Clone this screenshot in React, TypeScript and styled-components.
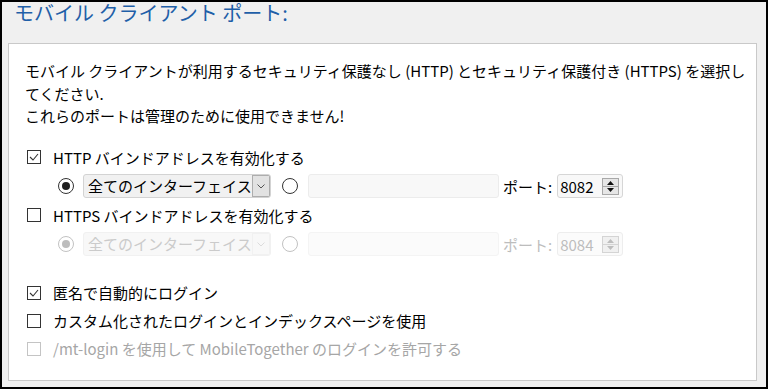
import styled, { createGlobalStyle } from "styled-components";

const GlobalStyle = createGlobalStyle`
    html, body {
        margin: 0;
        padding: 0;
        background: #f0f0f0;
    }
    body {
        font-family: "Noto Sans CJK JP", "Noto Sans", sans-serif;
    }
`;

const Frame = styled.div`
    width: 768px;
    height: 389px;
    box-sizing: border-box;
    border: 2px solid #000;
    background: #f0f0f0;
    padding: 0 9px 6px 6px;
    display: flex;
    flex-direction: column;
`;

const Title = styled.h1`
    margin: 0 0 19px 0;
    padding-left: 6px;
    font-size: 20px;
    line-height: 22px;
    font-weight: 400;
    color: #1f5fa8;
    white-space: nowrap;
`;

const Panel = styled.section`
    flex: 1;
    background: #fff;
    border: 1px solid #c9c9c9;
    padding: 16px 16px 0 16px;
    font-size: 15px;
    color: #000;
`;

const Description = styled.p`
    margin: 0;
    line-height: 22.5px;
    white-space: nowrap;
`;

const Options = styled.div`
    margin-top: 15.5px;
    padding-left: 2px;
    display: flex;
    flex-direction: column;
`;

const CheckRow = styled.label<{ $disabled?: boolean; $spaced?: boolean }>`
    height: 28px;
    display: flex;
    align-items: center;
    gap: 12px;
    margin-top: ${(p) => (p.$spaced ? "19.5px" : "0")};
    color: ${(p) => (p.$disabled ? "#a6a6a6" : "#000")};
    white-space: nowrap;
`;

const Box = styled.span<{ $disabled?: boolean }>`
    width: 14px;
    height: 14px;
    box-sizing: border-box;
    border: 1px solid ${(p) => (p.$disabled ? "#c4c4c4" : "#333")};
    background: #fff;
    display: flex;
    align-items: center;
    justify-content: center;
    flex-shrink: 0;
`;

const RadioRow = styled.div<{ $disabled?: boolean }>`
    height: 30px;
    display: flex;
    align-items: center;
    padding-left: 31px;
    color: ${(p) => (p.$disabled ? "#bdbdbd" : "#000")};
`;

const Radio = styled.span<{ $checked?: boolean; $disabled?: boolean; $gap?: number }>`
    width: 16px;
    height: 16px;
    box-sizing: border-box;
    border-radius: 50%;
    border: 1px solid ${(p) => (p.$disabled ? "#c2c2c2" : "#333")};
    background: #fff;
    display: flex;
    align-items: center;
    justify-content: center;
    flex-shrink: 0;
    margin-left: ${(p) => p.$gap ?? 0}px;

    &::after {
        content: "";
        display: ${(p) => (p.$checked ? "block" : "none")};
        width: 8px;
        height: 8px;
        border-radius: 50%;
        background: ${(p) => (p.$disabled ? "#bdbdbd" : "#1f1f1f")};
    }
`;

const Select = styled.div<{ $disabled?: boolean }>`
    margin-left: 9px;
    width: 188px;
    height: 24px;
    box-sizing: border-box;
    border: 1px solid ${(p) => (p.$disabled ? "#f1f1f1" : "#d3d3d3")};
    border-radius: 3px;
    background: ${(p) => (p.$disabled ? "#f8f8f8" : "#f1f1f1")};
    display: flex;
    align-items: center;
    overflow: hidden;
    color: ${(p) => (p.$disabled ? "#cbcbcb" : "#000")};
`;

const SelectText = styled.span`
    flex: 1;
    padding-left: 4px;
    white-space: nowrap;
    overflow: hidden;
    line-height: 22px;
`;

const SelectArrow = styled.span<{ $disabled?: boolean }>`
    width: 18px;
    height: 22px;
    box-sizing: border-box;
    flex-shrink: 0;
    border: 1px solid ${(p) => (p.$disabled ? "#f1f1f1" : "#adadad")};
    background: ${(p) => (p.$disabled ? "#f8f8f8" : "#e2e2e2")};
    display: flex;
    align-items: center;
    justify-content: center;
`;

const TextInput = styled.div<{ $disabled?: boolean }>`
    margin-left: 10px;
    width: 191px;
    height: 24px;
    box-sizing: border-box;
    border: 1px solid ${(p) => (p.$disabled ? "#f4f4f4" : "#ececec")};
    border-radius: 3px;
    background: ${(p) => (p.$disabled ? "#fbfbfb" : "#f8f8f8")};
`;

const PortLabel = styled.span`
    margin-left: 4px;
    white-space: nowrap;
`;

const Spin = styled.div<{ $disabled?: boolean }>`
    margin-left: 5px;
    width: 66px;
    height: 24px;
    box-sizing: border-box;
    border: 1px solid ${(p) => (p.$disabled ? "#ededed" : "#d6d6d6")};
    border-radius: 3px;
    background: ${(p) => (p.$disabled ? "#fbfbfb" : "#f8f8f8")};
    display: flex;
    align-items: center;
    justify-content: space-between;
    padding: 0 3px 0 2px;
    color: ${(p) => (p.$disabled ? "#bdbdbd" : "#000")};
`;

const CheckMark = ({ color }: { color: string }) => (
    <svg width="12" height="12" viewBox="0 0 12 12">
        <polyline points="2,6 5,9 10,3" fill="none" stroke={color} strokeWidth="1.1" />
    </svg>
);

const Chevron = ({ color }: { color: string }) => (
    <svg width="8" height="5" viewBox="0 0 8 5">
        <polyline points="0.5,0.5 4,4 7.5,0.5" fill="none" stroke={color} strokeWidth="1" />
    </svg>
);

const SpinButtons = ({ disabled }: { disabled?: boolean }) => {
    const edge = disabled ? "#d4d4d4" : "#a8a8a8";
    const fill = disabled ? "#f0f0f0" : "#e6e6e6";
    const arrow = disabled ? "#bdbdbd" : "#111";
    return (
        <svg width="17" height="17" viewBox="0 0 17 17">
            <rect x="0.5" y="0.5" width="16" height="16" fill={fill} stroke={edge} />
            <line x1="1" y1="8.5" x2="16" y2="8.5" stroke={edge} />
            <polygon points="5,7 12,7 8.5,3" fill={arrow} />
            <polygon points="5,10 12,10 8.5,14" fill={arrow} />
        </svg>
    );
};

type CheckProps = { label: string; checked?: boolean; disabled?: boolean; spaced?: boolean };
const Check = ({ label, checked, disabled, spaced }: CheckProps) => (
    <CheckRow $disabled={disabled} $spaced={spaced}>
        <Box $disabled={disabled}>{checked && <CheckMark color={disabled ? "#c4c4c4" : "#333"} />}</Box>
        {label}
    </CheckRow>
);

const BindRow = ({ port, disabled }: { port: string; disabled?: boolean }) => (
    <RadioRow $disabled={disabled}>
        <Radio $checked $disabled={disabled} />
        <Select $disabled={disabled}>
            <SelectText>全てのインターフェイス</SelectText>
            <SelectArrow $disabled={disabled}>
                <Chevron color={disabled ? "#dcdcdc" : "#555"} />
            </SelectArrow>
        </Select>
        <Radio $disabled={disabled} $gap={11} />
        <TextInput $disabled={disabled} />
        <PortLabel>ポート:</PortLabel>
        <Spin $disabled={disabled}>
            {port}
            <SpinButtons disabled={disabled} />
        </Spin>
    </RadioRow>
);

const App = () => {
    return (
        <>
            <GlobalStyle />
            <Frame>
                <Title>モバイル クライアント ポート:</Title>
                <Panel>
                    <Description>
                        モバイル クライアントが利用するセキュリティ保護なし (HTTP) とセキュリティ保護付き (HTTPS) を選択し
                        <br />
                        てください.
                        <br />
                        これらのポートは管理のために使用できません!
                    </Description>
                    <Options>
                        <Check label="HTTP バインドアドレスを有効化する" checked />
                        <BindRow port="8082" />
                        <Check label="HTTPS バインドアドレスを有効化する" />
                        <BindRow port="8084" disabled />
                        <Check label="匿名で自動的にログイン" checked spaced />
                        <Check label="カスタム化されたログインとインデックスページを使用" />
                        <Check label="/mt-login を使用して MobileTogether のログインを許可する" disabled />
                    </Options>
                </Panel>
            </Frame>
        </>
    );
};

export default App;
